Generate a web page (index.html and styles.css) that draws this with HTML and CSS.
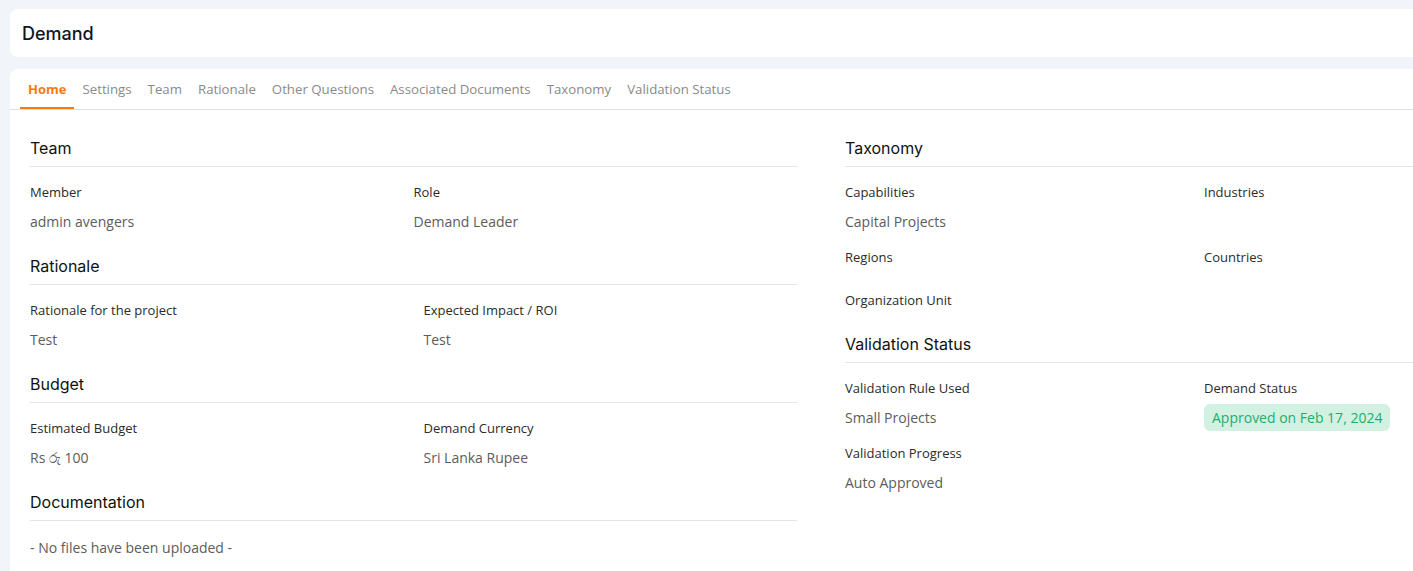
FILE: index.html
```html
<!DOCTYPE html>
<html>

<head>
    <meta charset="UTF-8">
    <title>Demand</title>
    <meta name="viewport" content="width=device-width, initial-scale=1.0">
    <link rel="stylesheet" href="styles.css">
</head>

<body>
    <div class="page">
        <div class="header-card">
            <h1>Demand</h1>
        </div>

        <div class="main-card">
            <div class="tabs">
                <a class="tab active">Home</a>
                <a class="tab">Settings</a>
                <a class="tab">Team</a>
                <a class="tab">Rationale</a>
                <a class="tab">Other Questions</a>
                <a class="tab">Associated Documents</a>
                <a class="tab">Taxonomy</a>
                <a class="tab">Validation Status</a>
            </div>

            <div class="columns">
                <div class="column left">
                    <div class="section">
                        <h2>Team</h2>
                        <div class="fields no-gap">
                            <div class="field">
                                <div class="label">Member</div>
                                <div class="value">admin avengers</div>
                            </div>
                            <div class="field">
                                <div class="label">Role</div>
                                <div class="value">Demand Leader</div>
                            </div>
                        </div>
                    </div>

                    <div class="section">
                        <h2>Rationale</h2>
                        <div class="fields">
                            <div class="field">
                                <div class="label">Rationale for the project</div>
                                <div class="value">Test</div>
                            </div>
                            <div class="field">
                                <div class="label">Expected Impact / ROI</div>
                                <div class="value">Test</div>
                            </div>
                        </div>
                    </div>

                    <div class="section">
                        <h2>Budget</h2>
                        <div class="fields">
                            <div class="field">
                                <div class="label">Estimated Budget</div>
                                <div class="value">Rs රු 100</div>
                            </div>
                            <div class="field">
                                <div class="label">Demand Currency</div>
                                <div class="value">Sri Lanka Rupee</div>
                            </div>
                        </div>
                    </div>

                    <div class="section">
                        <h2>Documentation</h2>
                        <div class="value note">- No files have been uploaded -</div>
                    </div>
                </div>

                <div class="column right">
                    <div class="section tight">
                        <h2>Taxonomy</h2>
                        <div class="fields no-gap">
                            <div class="field">
                                <div class="label">Capabilities</div>
                                <div class="value">Capital Projects</div>
                            </div>
                            <div class="field">
                                <div class="label">Industries</div>
                                <div class="value empty"></div>
                            </div>
                            <div class="field">
                                <div class="label">Regions</div>
                                <div class="value empty"></div>
                            </div>
                            <div class="field">
                                <div class="label">Countries</div>
                                <div class="value empty"></div>
                            </div>
                            <div class="field">
                                <div class="label">Organization Unit</div>
                                <div class="value empty"></div>
                            </div>
                        </div>
                    </div>

                    <div class="section">
                        <h2>Validation Status</h2>
                        <div class="fields no-gap">
                            <div class="field">
                                <div class="label">Validation Rule Used</div>
                                <div class="value">Small Projects</div>
                            </div>
                            <div class="field">
                                <div class="label">Demand Status</div>
                                <div class="value"><span class="badge">Approved on Feb 17, 2024</span></div>
                            </div>
                            <div class="field">
                                <div class="label">Validation Progress</div>
                                <div class="value">Auto Approved</div>
                            </div>
                        </div>
                    </div>
                </div>
            </div>
        </div>
    </div>
</body>

</html>
```

FILE: styles.css
```css
html,
body {
    margin: 0;
    overflow: hidden;
}

body {
    background: #f1f4f8;
    font-family: "Open Sans", "Noto Sans", sans-serif;
    color: #333;
}

.page {
    width: 1640px;
    padding: 9px 10px;
}

.header-card {
    background: #fff;
    border-radius: 8px;
    padding: 13px 12px 11px;
    margin-bottom: 12px;
}

h1 {
    margin: 0;
    font-family: Inter, "Liberation Sans", sans-serif;
    font-size: 18px;
    line-height: 24px;
    font-weight: 500;
    color: #0f1626;
}

.main-card {
    background: #fff;
    border-radius: 8px 8px 0 0;
    min-height: 520px;
}

.tabs {
    display: flex;
    padding: 0 10px;
    border-bottom: 1px solid #dcdfe3;
}

.tab {
    padding: 11px 8px 9px;
    font-size: 13.25px;
    line-height: 18px;
    color: #8a8a8a;
    border-bottom: 2px solid transparent;
    cursor: pointer;
}

.tab.active {
    color: #f57a12;
    font-weight: 700;
    font-size: 13px;
    border-bottom-color: #f57a12;
}

.columns {
    display: grid;
    grid-template-columns: 767px 718px;
    column-gap: 48px;
    padding: 26px 20px 0;
}

.section {
    margin-bottom: 22px;
}

.section.tight {
    margin-bottom: 14px;
}

h2 {
    margin: 0 0 16px;
    padding-bottom: 6px;
    border-bottom: 1px solid #e1e4e8;
    font-family: Inter, "Liberation Sans", sans-serif;
    font-size: 16px;
    line-height: 24px;
    font-weight: 400;
    color: #111;
}

.fields {
    display: grid;
    grid-template-columns: 1fr 1fr;
    column-gap: 20px;
    row-gap: 16px;
}

.fields.no-gap {
    column-gap: 0;
}

.label {
    font-size: 13px;
    line-height: 18px;
    font-weight: 500;
    color: #2b2b2b;
}

.value {
    margin-top: 11px;
    font-size: 14px;
    line-height: 20px;
    color: #5c5c5c;
}

.value.empty {
    margin-top: 9px;
}

.value.note {
    margin-top: 17px;
}

.badge {
    padding: 4px 8px;
    border-radius: 6px;
    background: #d2f1e2;
    color: #1eae6b;
}
```
